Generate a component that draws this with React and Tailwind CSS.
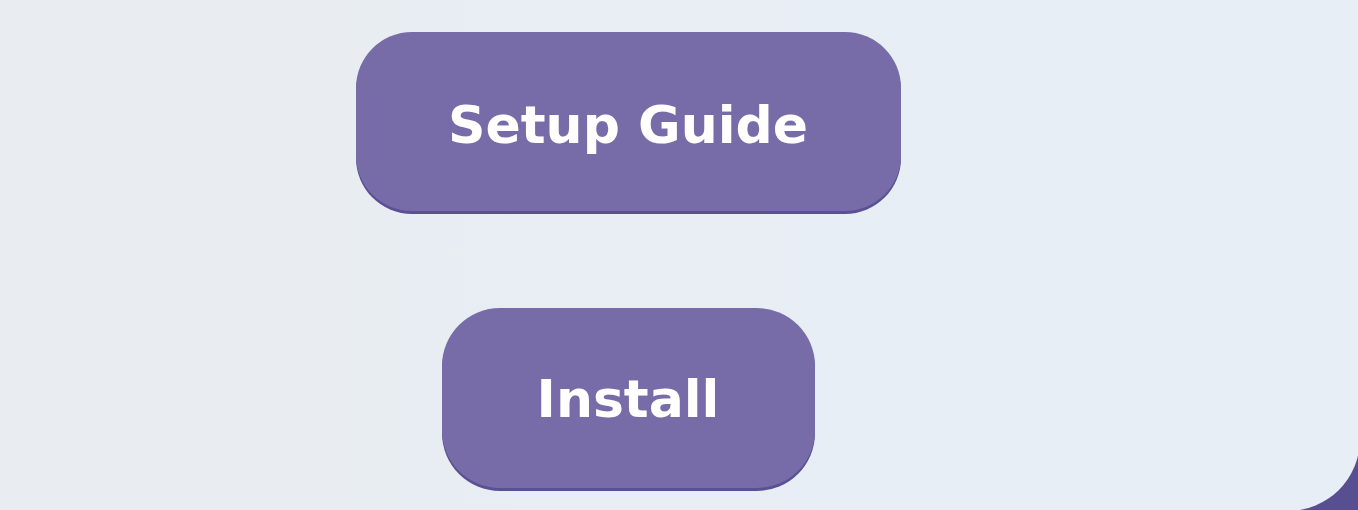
export default function App() {
  return (
    <div className="h-[510px] w-full overflow-hidden bg-[#574f92]">
      <div className="flex h-[511px] w-[1360px] rounded-br-[72px] bg-gradient-to-r from-[#e9edf1] to-[#e7eef6]">
        <div className="flex w-[1256px] flex-col items-center pt-[32px]" style={{ fontFamily: '"DejaVu Sans", Verdana, sans-serif' }}>
          <button className="flex h-[179px] w-[545px] items-center justify-center rounded-[56px] bg-[#786ca8] pt-[6px] text-[52px] font-bold text-white shadow-[0_3px_0_#5a5096]">
            Setup Guide
          </button>
          <button className="mt-[97px] flex h-[180px] w-[373px] items-center justify-center rounded-[58px] bg-[#786ca8] pt-[2px] text-[52px] font-bold text-white shadow-[0_3px_0_#5a5096]">
            Install
          </button>
        </div>
      </div>
    </div>
  );
}
